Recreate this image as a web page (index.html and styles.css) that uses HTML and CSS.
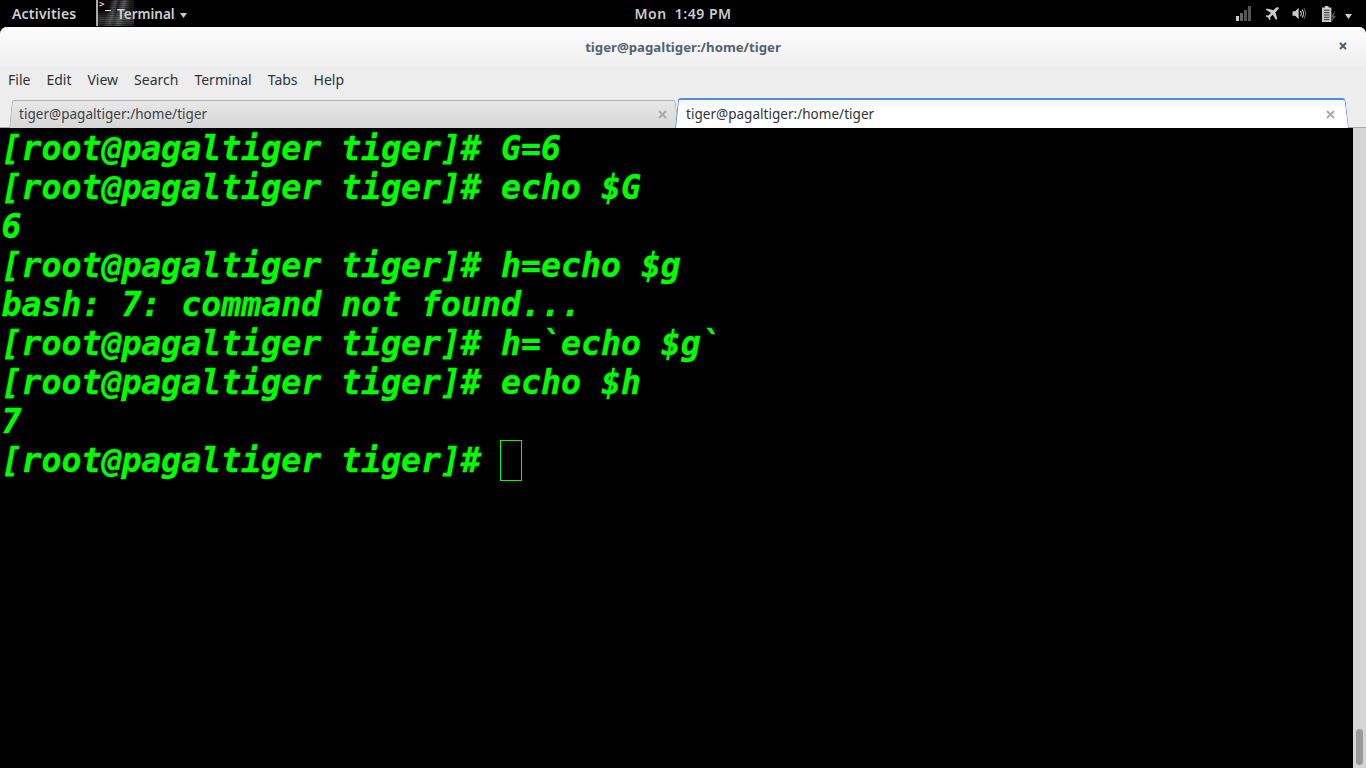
FILE: index.html
```html
<!DOCTYPE html>
<html lang="en">
<head>
<meta charset="utf-8">
<title>Terminal</title>
<link rel="stylesheet" href="styles.css">
</head>
<body>
<header class="topbar">
  <div class="topbar-left">
    <span class="activities">Activities</span>
    <div class="appmenu">
      <div class="appicon"><span class="prompt">&gt;</span><span class="under"></span></div>
      <span class="appname">Terminal</span>
      <svg class="caret" width="7" height="5" viewBox="0 0 7 5"><path d="M0 0h7L3.500 5z" fill="#ccc"/></svg>
    </div>
  </div>
  <div class="clock">Mon&nbsp; 1:49 PM</div>
  <div class="tray">
    <svg class="t-signal" width="15" height="15" viewBox="0 0 15 15"><rect x="0" y="10" width="3" height="5" fill="#ccc"/><rect x="4" y="7" width="3" height="8" fill="#666"/><rect x="8" y="4" width="3" height="11" fill="#555"/><rect x="12" y="0" width="3" height="15" fill="#555"/></svg>
    <svg class="t-plane" width="14" height="14" viewBox="0 0 15 15"><path d="M14.500 .500c-1-.8-2.400 0-3.300.9L9 3.500 2 1.500.8 2.700l5.500 3.600-2.500 2.800-2.300-.3L.5 9.800l2.800 1.500 1.500 2.900 1-1-.3-2.300 2.700-2.500 3.700 5.400 1.200-1.200-2-7L13.300 3.400c.9-.9 1.900-2 1.200-2.900z" fill="#ccc"/></svg>
    <svg class="t-vol" width="15" height="13" viewBox="0 0 16 15"><path d="M0 5h3l4-4v13l-4-4H0z" fill="#ccc"/><path d="M9 4.500c1.300 1.800 1.300 4.200 0 6M11 3c2 2.700 2 6.300 0 9" fill="none" stroke="#bbb" stroke-width="1.300"/><path d="M13 1.500c2.700 3.700 2.700 8.300 0 12" fill="none" stroke="#666" stroke-width="1.300"/></svg>
    <svg class="t-batt" width="15" height="16" viewBox="0 0 16 17"><path d="M3 0h4v1.500h3V17H0V1.500h3z" fill="#ccc"/><path d="M2 4.500h6M2 7h6M2 9.500h6M2 12h6M2 14.500h6" stroke="#222" stroke-width="1"/><path d="M13 6l-4 6h2.500L10 17l5-6.500h-2.800L14 6z" fill="#555"/></svg>
    <svg class="caret" width="7" height="5" viewBox="0 0 7 5"><path d="M0 0h7L3.500 5z" fill="#ccc"/></svg>
  </div>
</header>
<main class="window">
  <div class="titlebar">
    <span class="title">tiger@pagaltiger:/home/tiger</span>
    <svg class="win-close" width="8" height="8" viewBox="0 0 8 8"><path d="M1 1l6 6M7 1L1 7" stroke="#4e5d68" stroke-width="2.100"/></svg>
  </div>
  <nav class="menubar">
    <span>File</span><span>Edit</span><span>View</span><span>Search</span><span>Terminal</span><span>Tabs</span><span>Help</span>
  </nav>
  <div class="tabbar">
    <div class="tab tab-inactive">
      <span>tiger@pagaltiger:/home/tiger</span>
      <svg width="9" height="9" viewBox="0 0 9 9"><path d="M1 1l7 7M8 1L1 8" stroke="#aaa" stroke-width="2"/></svg>
    </div>
    <div class="tab tab-active">
      <span>tiger@pagaltiger:/home/tiger</span>
      <svg width="9" height="9" viewBox="0 0 9 9"><path d="M1 1l7 7M8 1L1 8" stroke="#aaa" stroke-width="2"/></svg>
    </div>
  </div>
  <div class="termarea">
    <pre class="terminal">[root@pagaltiger tiger]# G=6
[root@pagaltiger tiger]# echo $G
6
[root@pagaltiger tiger]# h=echo $g
bash: 7: command not found...
[root@pagaltiger tiger]# h=`echo $g`
[root@pagaltiger tiger]# echo $h
7
[root@pagaltiger tiger]# <span class="cursor"></span></pre>
    <div class="scrollbar"><div class="thumb"></div></div>
  </div>
</main>
</body>
</html>
```
FILE: styles.css
```css
html, body { margin: 0; padding: 0; height: 100%; overflow: hidden; background: #000; }
body { display: flex; flex-direction: column; width: 1366px; height: 768px; font-family: "Noto Sans", sans-serif; }

.topbar { height: 27px; flex: none; background: #000; display: grid; grid-template-columns: 1fr auto 1fr; align-items: center; color: #ccc; font-family: "Noto Sans", sans-serif; }
.topbar-left { display: flex; align-items: center; height: 27px; }
.activities { margin-left: 12px; width: 84px; font-weight: 600; font-size: 14px; letter-spacing: .2px; color: #d0d0d0; }
.appmenu { display: flex; align-items: center; height: 27px; position: relative; }
.appicon { width: 38px; height: 26px; margin-right: -17px; box-sizing: border-box; border-left: 2px solid #aaa; background: repeating-linear-gradient(180deg, rgba(0,0,0,.35) 0 1px, transparent 1px 2px), linear-gradient(180deg, transparent 0 40%, rgba(120,120,120,.5) 75%, rgba(70,70,70,.4) 100%), linear-gradient(105deg, #0a0a0a 0 28%, #555 42%, #222 50%, #666 62%, #222 76%, #0a0a0a 100%); align-self: flex-start; position: relative; }
.prompt { display: block; font: 9px/9px "DejaVu Sans Mono", monospace; color: #eee; margin: 0 0 0 1px; }
.under { position: absolute; left: 7px; top: 10px; width: 6px; height: 1px; background: #ddd; }
.appname { position: relative; font-weight: 600; font-size: 13.500px; color: #d0d0d0; }
.caret { margin-left: 5px; margin-top: 3px; }
.clock { font-size: 14px; font-weight: 600; color: #ccc; letter-spacing: .5px; }
.tray { display: flex; align-items: center; justify-content: flex-end; padding-right: 14px; }
.tray .caret { margin-left: 8px; margin-top: 5px; }
.t-signal { margin-right: 14px; }
.t-plane { margin-right: 13px; }
.t-vol { margin-right: 15px; }

.window { flex: 1; min-height: 0; display: flex; flex-direction: column; background: #ededed; border-radius: 7px 7px 0 0; overflow: hidden; }
.titlebar { height: 39px; flex: none; display: flex; align-items: center; justify-content: center; position: relative; background: linear-gradient(180deg, #fdfdfd 0%, #efefef 100%); }
.title { font-weight: 700; font-size: 13.200px; color: #54636d; }
.win-close { position: absolute; right: 19px; top: 15px; }
.menubar { height: 31px; flex: none; display: flex; gap: 16px; align-items: flex-start; padding: 5px 0 0 8px; box-sizing: border-box; background: #ededed; font-size: 14px; line-height: 17px; color: #2e3436; }
.tabbar { height: 31px; flex: none; display: flex; align-items: flex-end; padding-left: 9px; box-sizing: border-box; background: linear-gradient(180deg, #ededed 0 30px, #a8a8a8 30px); color: #2e3436; }
.tab { box-sizing: border-box; display: flex; align-items: center; justify-content: space-between; font-size: 13.500px; letter-spacing: .03px; position: relative; }
.tab > * { position: relative; z-index: 1; }
.tab::before, .tab::after { content: ""; position: absolute; top: 0; bottom: 0; box-sizing: border-box; }
.tab::before { left: 0; width: 50%; border-radius: 3px 0 0 0; transform-origin: bottom left; transform: skewX(-6deg); }
.tab::after { right: 0; width: 50%; border-radius: 0 3px 0 0; transform-origin: bottom right; transform: skewX(7deg); }
.tab-inactive { width: 670px; height: 28px; margin-right: -4px; padding: 0 12px 0 10px; color: #3c4245; }
.tab-inactive::before, .tab-inactive::after { background: linear-gradient(180deg, #e8e8e8, #d6d6d6); border-top: 1px solid #b0b0b0; }
.tab-inactive::before { border-left: 1px solid #b0b0b0; }
.tab-inactive::after { border-right: 1px solid #b0b0b0; }
.tab-active { width: 674px; height: 30px; padding: 2px 14px 0 11px; }
.tab-active::before, .tab-active::after { background: linear-gradient(180deg, #f4f4f4, #fff 40%); border-top: 2px solid #4a90d9; }
.tab-active::before { border-left: 1px solid #4a90d9; }
.tab-active::after { border-right: 1px solid #6d9fd3; }

.termarea { flex: 1; min-height: 0; display: flex; background: #000; }
.terminal { flex: 1; margin: 0; padding: 1px 0 0 1.500px; font-family: "DejaVu Sans Mono", monospace; font-weight: 700; font-style: italic; font-size: 33.200px; line-height: 39px; color: #00ff00; -webkit-text-stroke: .3px #00ff00; background: #000; overflow: hidden; }
.cursor { display: inline-block; position: relative; width: 20px; height: 1px; }
.cursor::after { content: ""; position: absolute; left: -1.500px; top: -31px; box-sizing: border-box; width: 22px; height: 41px; border: 1px solid #00ff00; }
.scrollbar { width: 13px; flex: none; background: #d5d5d5; position: relative; }
.thumb { position: absolute; left: 3px; right: 3px; bottom: 3px; height: 36px; border-radius: 4px; background: #9a9a9a; }
```
